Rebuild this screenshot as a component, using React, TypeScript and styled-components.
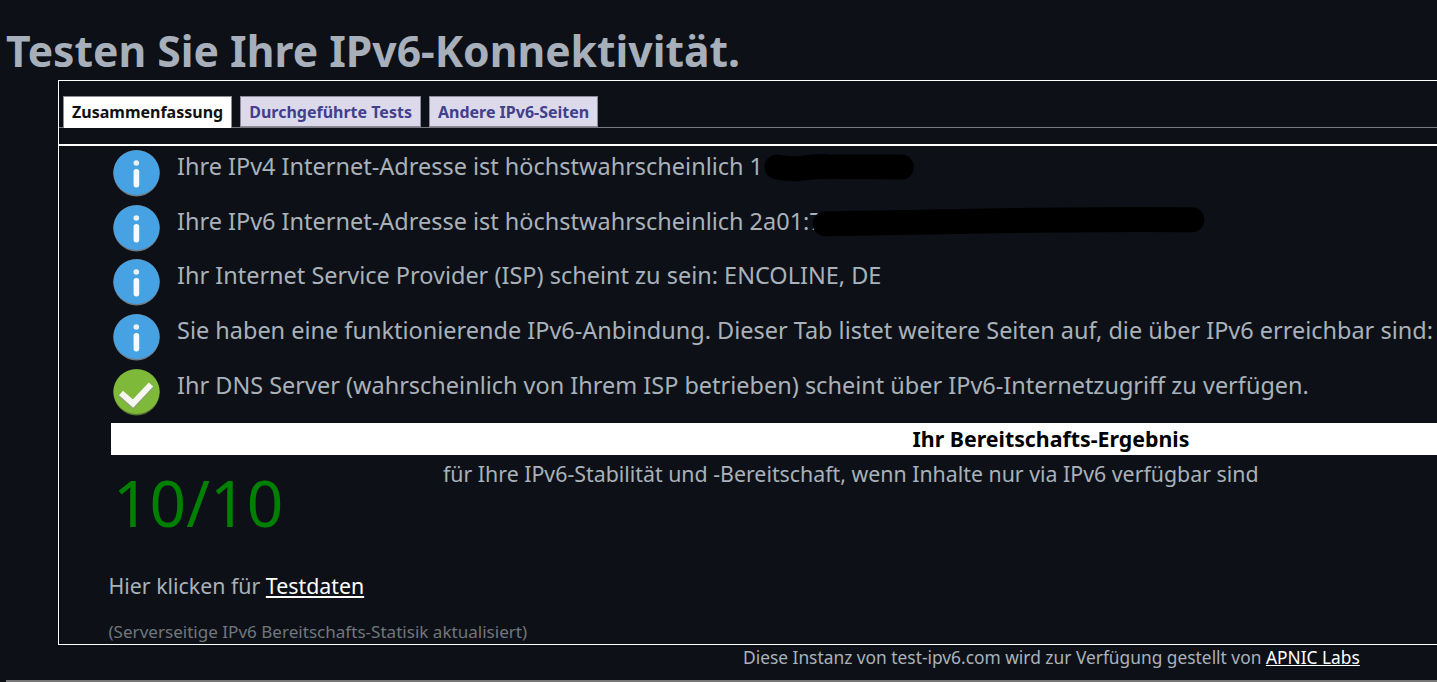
import styled, { createGlobalStyle } from "styled-components";

const GlobalStyle = createGlobalStyle`
  html, body {
    margin: 0;
    padding: 0;
    height: 682px;
    overflow: hidden;
    background: #0d1117;
  }
  body {
    font-family: "Noto Sans", "Open Sans", sans-serif;
    color: #a9b1ba;
  }
`;

const Page = styled.div`
  width: 1437px;
  height: 682px;
  overflow: hidden;
  display: flex;
  flex-direction: column;
`;

const Title = styled.h1`
  margin: 0;
  padding: 22px 0 0 6px;
  height: 58px;
  font-size: 42.67px;
  line-height: 58px;
  font-weight: 700;
  white-space: nowrap;
  color: #a7afbb;
`;

const Panel = styled.div`
  flex: none;
  margin-left: 58px;
  width: 2000px;
  height: 565px;
  box-sizing: border-box;
  border: 1px solid #ffffff;
  display: flex;
  flex-direction: column;
`;

const TabBar = styled.div`
  flex: none;
  margin-top: 15px;
  padding-left: 4px;
  height: 32px;
  box-sizing: border-box;
  display: flex;
  gap: 8px;
  border-bottom: 1px solid #7a7a80;
`;

const Tab = styled.div<{ $active?: boolean }>`
  height: ${(p) => (p.$active ? "32px" : "31px")};
  padding: 0 8px;
  box-sizing: border-box;
  border: 1px solid #8b8b99;
  border-bottom: ${(p) => (p.$active ? "none" : "1px solid #8b8b99")};
  background: ${(p) => (p.$active ? "#ffffff" : "#dcdaea")};
  color: ${(p) => (p.$active ? "#111111" : "#423f8c")};
  font-size: 16px;
  font-weight: 700;
  line-height: 31px;
`;

const Divider = styled.div`
  flex: none;
  margin-top: 16px;
  height: 2px;
  background: #ffffff;
`;

const Rows = styled.div`
  flex: none;
  display: flex;
  flex-direction: column;
  gap: 6.7px;
  padding: 4px 0 0 54px;
`;

const Row = styled.div`
  height: 48px;
  display: flex;
  align-items: flex-start;
  gap: 16px;
`;

const IconBox = styled.svg`
  flex: none;
  width: 48px;
  height: 48px;
`;

const RowText = styled.div`
  font-size: 23.47px;
  line-height: 32px;
  color: #a9b1ba;
  white-space: nowrap;
  display: flex;
  align-items: center;
`;

const Blot = styled.svg<{ $shift: number }>`
  flex: none;
  height: 32px;
  margin-left: ${(p) => p.$shift}px;
`;

const ScoreHead = styled.div`
  flex: none;
  margin: 6.2px 0 0 52px;
  width: 1880px;
  height: 32px;
  background: #ffffff;
  color: #000000;
  font-size: 21.33px;
  font-weight: 700;
  line-height: 32px;
  text-align: center;
`;

const ScoreRow = styled.div`
  flex: none;
  margin-left: 52px;
  display: flex;
  height: 100px;
`;

const Score = styled.div`
  width: 332px;
  padding: 4px 0 0 2px;
  box-sizing: border-box;
  color: #008000;
  font-size: 64px;
  line-height: 87px;
`;

const ScoreNote = styled.div`
  font-size: 21.33px;
  line-height: 38px;
  color: #a9b1ba;
  white-space: nowrap;
`;

const DataLine = styled.div`
  flex: none;
  margin: 16px 0 0 49.5px;
  font-size: 21.33px;
  line-height: 30px;
  color: #a9b1ba;
`;

const StatusLine = styled.div`
  flex: none;
  margin: 20px 0 0 49.5px;
  font-size: 17.07px;
  line-height: 22px;
  color: #71767c;
`;

const Link = styled.a`
  color: #ffffff;
  text-decoration: underline;
`;

const Footer = styled.div`
  flex: none;
  padding: 0 0 0 743px;
  font-size: 17.35px;
  line-height: 24px;
  color: #a9b1ba;
  white-space: nowrap;
`;

const BottomRule = styled.div`
  flex: none;
  margin: 11px 0 0 6px;
  height: 2px;
  background: #777777;
`;

const InfoIcon = () => (
  <IconBox viewBox="0 0 48 48">
    <circle cx="23.5" cy="23.2" r="23.2" fill="#6f7a84" />
    <ellipse cx="23.5" cy="22.6" rx="23" ry="22.4" fill="#47a2e3" />
    <circle cx="23.3" cy="13" r="2.8" fill="#eef1f3" />
    <rect x="20.6" y="19" width="5.6" height="18.4" rx="2.6" fill="#f8f9fa" />
  </IconBox>
);

const CheckIcon = () => (
  <IconBox viewBox="0 0 48 48">
    <circle cx="23.5" cy="23.2" r="23.2" fill="#56752f" />
    <ellipse cx="23.5" cy="22.6" rx="23" ry="22.4" fill="#7fb93a" />
    <path d="M8 25.5 L20 36 L38 17" fill="none" stroke="#8a9a78" strokeWidth="6" />
    <path d="M8 24 L20 34.5 L38 15.5" fill="none" stroke="#f6f7f2" strokeWidth="6" />
  </IconBox>
);

const App = () => {
  return (
    <Page>
      <GlobalStyle />
      <Title>Testen Sie Ihre IPv6-Konnektivität.</Title>
      <Panel>
        <TabBar>
          <Tab $active>Zusammenfassung</Tab>
          <Tab>Durchgeführte Tests</Tab>
          <Tab>Andere IPv6-Seiten</Tab>
        </TabBar>
        <Divider />
        <Rows>
          <Row>
            <InfoIcon />
            <RowText>
              Ihre IPv4 Internet-Adresse ist höchstwahrscheinlich 1
              <Blot $shift={1} viewBox="0 0 150 32" width="150">
                <path d="M13 17 Q26 20 40 18 T62 16.5 L137.5 17" stroke="#000" strokeWidth="25" strokeLinecap="round" fill="none" />
              </Blot>
            </RowText>
          </Row>
          <Row>
            <InfoIcon />
            <RowText>
              Ihre IPv6 Internet-Adresse ist höchstwahrscheinlich 2a01:7
              <Blot $shift={-13.4} viewBox="0 0 400 32" width="400">
                <path d="M16 18.7 C120 18 240 13 383 14.7" stroke="#000" strokeWidth="25" strokeLinecap="round" fill="none" />
              </Blot>
            </RowText>
          </Row>
          <Row>
            <InfoIcon />
            <RowText>Ihr Internet Service Provider (ISP) scheint zu sein: ENCOLINE, DE</RowText>
          </Row>
          <Row>
            <InfoIcon />
            <RowText>Sie haben eine funktionierende IPv6-Anbindung. Dieser Tab listet weitere Seiten auf, die über IPv6 erreichbar sind:</RowText>
          </Row>
          <Row>
            <CheckIcon />
            <RowText>Ihr DNS Server (wahrscheinlich von Ihrem ISP betrieben) scheint über IPv6-Internetzugriff zu verfügen.</RowText>
          </Row>
        </Rows>
        <ScoreHead>Ihr Bereitschafts-Ergebnis</ScoreHead>
        <ScoreRow>
          <Score>10/10</Score>
          <ScoreNote>für Ihre IPv6-Stabilität und -Bereitschaft, wenn Inhalte nur via IPv6 verfügbar sind</ScoreNote>
        </ScoreRow>
        <DataLine>
          Hier klicken für <Link href="#">Testdaten</Link>
        </DataLine>
        <StatusLine>(Serverseitige IPv6 Bereitschafts-Statisik aktualisiert)</StatusLine>
      </Panel>
      <Footer>
        Diese Instanz von test-ipv6.com wird zur Verfügung gestellt von <Link href="#">APNIC Labs</Link>
      </Footer>
      <BottomRule />
    </Page>
  );
};

export default App;
